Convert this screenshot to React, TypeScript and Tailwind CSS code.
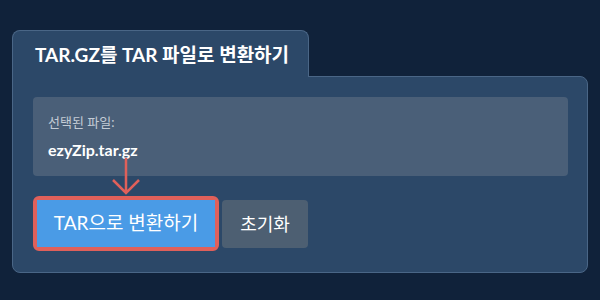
import React from 'react';

const font = { fontFamily: 'Lato, "Noto Sans CJK KR", sans-serif' };

export default function App() {
  return (
    <div className="h-[300px] w-[600px] bg-[#10223a] px-[12px] pt-[30px]" style={font}>
      <div className="relative z-10 -mb-px flex h-[47px] w-[297px] items-center rounded-t-lg border border-b-0 border-[#4a6686] bg-[#2c4868] pl-[22px]">
        <h1 className="text-[19px] font-bold leading-none text-white">TAR.GZ를 TAR 파일로 변환하기</h1>
      </div>
      <div className="relative h-[197px] w-[576px] rounded-b-lg rounded-tr-lg border border-[#4a6686] bg-[#2c4868] pl-[20px] pr-[19px] pt-[20px]">
        <div className="h-[79px] rounded bg-[#4a5f78] px-[15px] pt-[16px]">
          <p className="text-[13px] leading-[18px] text-[#c3cbd5]">선택된 파일:</p>
          <p className="mt-[9px] text-[16px] font-bold leading-[20px] text-white">ezyZip.tar.gz</p>
        </div>
        <div className="mt-[20px] flex items-start gap-[3px]">
          <div className="rounded-md border-4 border-[#e0605a]">
            <button className="flex h-[47px] w-[178px] items-center justify-center bg-[#4a9be6] text-[19px] text-white">
              TAR으로 변환하기
            </button>
          </div>
          <button className="mt-[4px] flex h-[48px] w-[86px] items-center justify-center rounded bg-[#4d5f72] text-[18px] text-white">
            초기화
          </button>
        </div>
        <svg className="absolute left-[99px] top-[81px]" width="28" height="37" viewBox="0 0 28 37" fill="none">
          <path d="M14 0 V35 M1 22 L14 35 L27 22" stroke="#e0605a" strokeWidth="2.5" />
        </svg>
      </div>
    </div>
  );
}
